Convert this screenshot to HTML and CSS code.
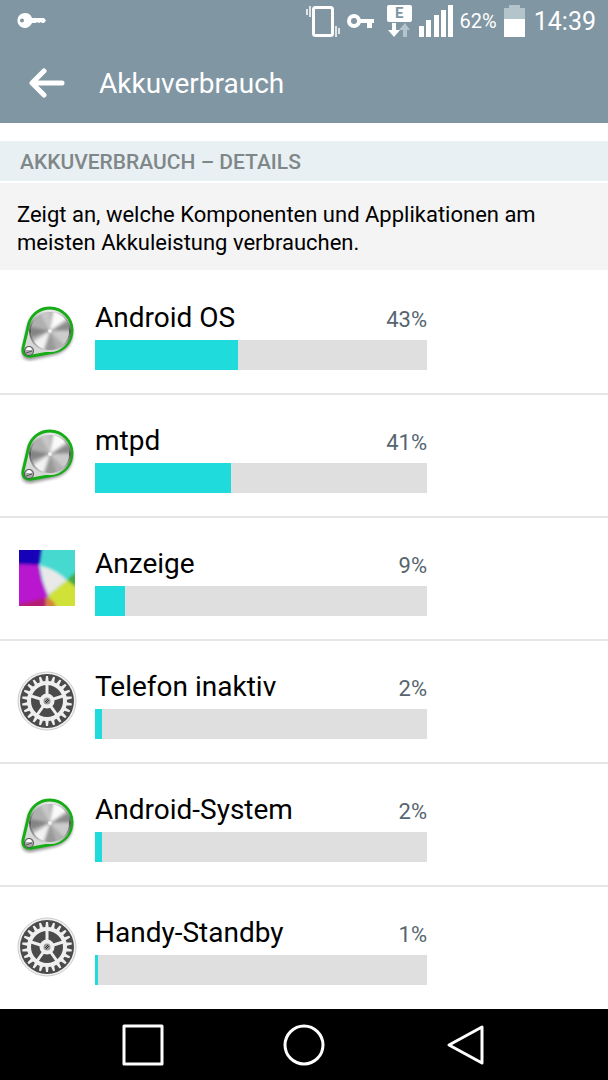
FILE: index.html
```html
<!DOCTYPE html>
<html lang="de">
<head>
  <meta charset="utf-8">
  <meta name="viewport" content="width=device-width, initial-scale=1">
  <title>Akkuverbrauch</title>
  <link rel="stylesheet" href="styles.css">
</head>
<body>
  <!-- shared icons -->
  <svg class="defs" width="0" height="0" aria-hidden="true">
    <defs>
      <linearGradient id="rim" x1="0" y1="0" x2="0" y2="1">
        <stop offset="0" stop-color="#eee"/>
        <stop offset="0.5" stop-color="#555"/>
        <stop offset="1" stop-color="#ddd"/>
      </linearGradient>
      <filter id="soft" x="-20%" y="-20%" width="140%" height="140%"><feGaussianBlur stdDeviation="1.8"/></filter>
      <clipPath id="disc"><circle cx="33" cy="29" r="19"/></clipPath>
      <clipPath id="square"><rect x="2" y="2" width="56" height="56"/></clipPath>
    </defs>
    <symbol id="knob" viewBox="0 0 60 60">
      <path d="M10 24C13 13 22 8 33 8C46 8 56 18 56 31C56 42 49 50 38 53L15 58C9 59 4 56 5 49Z" fill="#555" opacity="0.6" filter="url(#soft)"/>
      <path d="M12 21C15 12 23 6 33 6C45 6 55 16 55 28C55 39 48 48 37 50L15 54C9 55 5 52 6 46Z" fill="#d8d8d8" stroke="#16ad16" stroke-width="3"/>
      <circle cx="33" cy="29" r="21" fill="url(#rim)"/>
      <circle cx="33" cy="29" r="19" fill="#b0b0b0"/>
      <g clip-path="url(#disc)">
        <g filter="url(#soft)">
          <path d="M33 29L20 6H33Z" fill="#c8c8c8"/>
          <path d="M33 29L37 5L54 14Z" fill="#fafafa"/>
          <path d="M33 29L56 17V28Z" fill="#8c8c8c"/>
          <path d="M33 29L57 29L51 47Z" fill="#ccc"/>
          <path d="M33 29L41 53L26 53Z" fill="#999"/>
          <path d="M33 29L25 53L9 44Z" fill="#f2f2f2"/>
          <path d="M33 29L9 37V24Z" fill="#848484"/>
        </g>
        <circle cx="33" cy="29" r="2" fill="#eee"/>
      </g>
      <circle cx="12" cy="49" r="5" fill="#555"/>
      <circle cx="12" cy="49" r="4" fill="#aaa"/>
      <path d="M9 48C10 44 14 44 15 48Z" fill="#fff"/>
      <path d="M9 51L15 49" stroke="#555"/>
    </symbol>
    <symbol id="gear" viewBox="0 0 60 60">
      <circle cx="30" cy="30" r="29" fill="#f0f0f0" stroke="#ccc"/>
      <circle cx="30" cy="30" r="27" fill="#4b4b4b"/>
      <g fill="#efefef">
        <g id="teeth"><path d="M28 13L29 5H31L32 13Z"/><path d="M28 47L29 55H31L32 47Z"/></g>
        <use href="#teeth" transform="rotate(16.36 30 30)"/>
        <use href="#teeth" transform="rotate(32.73 30 30)"/>
        <use href="#teeth" transform="rotate(49.09 30 30)"/>
        <use href="#teeth" transform="rotate(65.45 30 30)"/>
        <use href="#teeth" transform="rotate(81.82 30 30)"/>
        <use href="#teeth" transform="rotate(98.18 30 30)"/>
        <use href="#teeth" transform="rotate(114.55 30 30)"/>
        <use href="#teeth" transform="rotate(130.91 30 30)"/>
        <use href="#teeth" transform="rotate(147.27 30 30)"/>
        <use href="#teeth" transform="rotate(163.64 30 30)"/>
      </g>
      <circle cx="30" cy="30" r="18" fill="none" stroke="#efefef" stroke-width="4"/>
      <path d="M30 30V13M30 30L46 25M30 30L40 44M30 30L20 44M30 30L14 25" stroke="#efefef" stroke-width="3"/>
      <circle cx="30" cy="30" r="7.500" fill="#efefef"/>
      <circle cx="30" cy="30" r="3.500" fill="#999"/>
      <path d="M28 31L31 28M29 32L32 29" stroke="#333"/>
    </symbol>
  </svg>

  <header class="top">
    <div class="status">
      <svg class="notice" width="30" height="16" viewBox="0 0 30 16" fill="#fff">
        <path fill-rule="evenodd" d="M8 0A7.500 7.500 0 0 1 15 5H27L29 7.500L27 10H25L24 9L22 10L20 9L19 10H15A7.500 7.500 0 1 1 8 0ZM5 5.500A2 2 0 1 0 5 9.500A2 2 0 1 0 5 5.500Z"/>
      </svg>
      <svg width="34" height="32" viewBox="0 0 34 32" fill="none" stroke="#fff" stroke-width="2">
        <rect x="7.500" y="2.500" width="19" height="28" rx="2" stroke-width="3"/>
        <path d="M1 4V10M4 1V12M30 21V32M33 23V29" stroke-width="1.500"/>
      </svg>
      <svg class="vpn" width="27" height="16" viewBox="0 0 27 16">
        <circle cx="7" cy="8" r="5" fill="none" stroke="#fff" stroke-width="4"/>
        <path d="M12 6H27V10H25V15H20V10H12Z" fill="#fff"/>
      </svg>
      <div class="data">
        <span class="edge">E</span>
        <svg width="22" height="14" viewBox="0 0 22 14">
          <path d="M4 0H8V7H12L6 14L0 7H4Z" fill="#fff"/>
          <path d="M15 14H19V7H22L17 0L11 7H15Z" fill="#b3c4ca"/>
        </svg>
      </div>
      <svg width="34" height="32" viewBox="0 0 34 32" fill="#fff">
        <path d="M0 21H5V32H0ZM7 15H12V32H7ZM15 10H20V32H15ZM22 5H27V32H22ZM29 0H34V32H29Z"/>
      </svg>
      <span class="level">62%</span>
      <svg width="21" height="32" viewBox="0 0 21 32">
        <path d="M0 3H5V0H16V3H21V14H0Z" fill="#b3c4ca"/>
        <path d="M0 14H21V32H0Z" fill="#fff"/>
      </svg>
      <time class="clock">14:39</time>
    </div>
    <div class="titlebar">
      <button class="back" type="button" aria-label="Zurück">
        <svg width="36" height="30" viewBox="0 0 36 30" fill="none" stroke="#fff" stroke-width="5" stroke-linecap="round" stroke-linejoin="round">
          <path d="M15 3L3 15L15 27M4 15H33"/>
        </svg>
      </button>
      <h1>Akkuverbrauch</h1>
    </div>
  </header>

  <main>
    <h2>AKKUVERBRAUCH – DETAILS</h2>
    <p class="info">Zeigt an, welche Komponenten und Applikationen am meisten Akkuleistung verbrauchen.</p>
    <ul class="usage">
      <li>
        <svg class="icon"><use href="#knob"/></svg>
        <div class="entry">
          <div class="line"><span class="name">Android OS</span><span class="percent">43%</span></div>
          <div class="bar"><div class="fill" style="width: 43%"></div></div>
        </div>
      </li>
      <li>
        <svg class="icon"><use href="#knob"/></svg>
        <div class="entry">
          <div class="line"><span class="name">mtpd</span><span class="percent">41%</span></div>
          <div class="bar"><div class="fill" style="width: 41%"></div></div>
        </div>
      </li>
      <li>
        <svg class="icon" viewBox="0 0 60 60">
          <g clip-path="url(#square)">
            <rect width="60" height="60" fill="#45d9cf"/>
            <g filter="url(#soft)">
              <path d="M-4 -4H25L22 18L-4 17Z" fill="#1600b8"/>
              <path d="M-4 16L22 17L25 32L31 47L28 64H-4Z" fill="#b819cf"/>
              <path d="M-4 58L30 49L40 64H-4Z" fill="#b51c72"/>
              <path d="M31 47L50 32L64 38V64H40Z" fill="#d0e138"/>
              <path d="M50 32L64 20V43Z" fill="#43ad43"/>
              <path d="M29 48L37 54L41 64H29Z" fill="#d4853a"/>
              <path d="M23 17Q41 22 50 32L31 47Q25 34 23 17Z" fill="#e9e9e9"/>
            </g>
          </g>
        </svg>
        <div class="entry">
          <div class="line"><span class="name">Anzeige</span><span class="percent">9%</span></div>
          <div class="bar"><div class="fill" style="width: 9%"></div></div>
        </div>
      </li>
      <li>
        <svg class="icon"><use href="#gear"/></svg>
        <div class="entry">
          <div class="line"><span class="name">Telefon inaktiv</span><span class="percent">2%</span></div>
          <div class="bar"><div class="fill" style="width: 2%"></div></div>
        </div>
      </li>
      <li>
        <svg class="icon"><use href="#knob"/></svg>
        <div class="entry">
          <div class="line"><span class="name">Android-System</span><span class="percent">2%</span></div>
          <div class="bar"><div class="fill" style="width: 2%"></div></div>
        </div>
      </li>
      <li>
        <svg class="icon"><use href="#gear"/></svg>
        <div class="entry">
          <div class="line"><span class="name">Handy-Standby</span><span class="percent">1%</span></div>
          <div class="bar"><div class="fill" style="width: 1%"></div></div>
        </div>
      </li>
    </ul>
  </main>

  <nav class="keys">
    <button type="button" aria-label="Übersicht">
      <svg width="42" height="42" viewBox="0 0 42 42"><rect x="2" y="2" width="38" height="38"/></svg>
    </button>
    <button type="button" aria-label="Startseite">
      <svg width="42" height="42" viewBox="0 0 42 42"><circle cx="21" cy="21" r="19"/></svg>
    </button>
    <button type="button" aria-label="Zurück">
      <svg width="42" height="42" viewBox="0 0 42 42"><path d="M38 3V39L5 21Z"/></svg>
    </button>
  </nav>
</body>
</html>
```
FILE: styles.css
```css
* {
  box-sizing: border-box;
}
body {
  margin: 0;
  min-height: 100vh;
  display: flex;
  flex-direction: column;
  background: #fff;
  color: #000;
  font-family: Roboto, "Liberation Sans", sans-serif;
}
svg {
  display: block;
  flex: none;
}
.defs {
  position: absolute;
}
button {
  padding: 0;
  border: 0;
  background: none;
}
.top {
  background: #8096a3;
  color: #fff;
}
/* status bar */
.status {
  display: flex;
  align-items: center;
  gap: 7px;
  height: 42px;
  padding: 0 12px 0 17px;
}
.notice {
  margin-right: auto;
}
.vpn {
  margin-right: 6px;
}
.data {
  display: flex;
  flex-direction: column;
  align-items: center;
  gap: 1px;
}
.edge {
  width: 25px;
  border-radius: 2px;
  background: #fff;
  color: #8096a3;
  font-size: 15px;
  font-weight: 700;
  line-height: 17px;
  text-align: center;
}
.level {
  font-size: 20px;
}
.clock {
  margin-left: 2px;
  font-size: 25px;
}
/* title */
.titlebar {
  display: flex;
  align-items: center;
  gap: 34px;
  height: 81px;
  padding: 0 29px;
}
h1 {
  margin: 0;
  padding-top: 2px;
  font-size: 28px;
  font-weight: 400;
}
main {
  flex: 1;
  padding-top: 18px;
}
h2 {
  margin: 0 0 2px;
  padding: 2px 20px 0;
  background: #e8f0f3;
  color: #7f8788;
  font-size: 21px;
  font-weight: 500;
  line-height: 38px;
}
.info {
  margin: 0;
  padding: 18px 17px 13px;
  background: #f4f4f4;
  font-size: 22px;
  line-height: 28px;
}
/* list */
.usage {
  margin: 0;
  padding: 2px 0 0;
  list-style: none;
}
.usage li {
  display: flex;
  gap: 18px;
  padding: 30px 181px 23px 17px;
  border-bottom: 2px solid #e6e6e6;
}
.usage li:last-child {
  border-bottom: 0;
}
.icon {
  width: 60px;
  height: 60px;
}
.entry {
  flex: 1;
}
.line {
  display: flex;
  justify-content: space-between;
  align-items: baseline;
  height: 38px;
  line-height: 32px;
}
.name {
  font-size: 28px;
}
.percent {
  color: #56656f;
  font-size: 22px;
}
.bar {
  height: 30px;
  background: #dfdfdf;
}
.fill {
  height: 100%;
  background: #1fdbdc;
}
/* navigation keys */
.keys {
  display: grid;
  grid-template-columns: repeat(3, 1fr);
  height: 71px;
  padding: 0 62px;
  background: #000;
}
.keys button {
  display: flex;
  align-items: center;
  justify-content: center;
}
.keys svg {
  fill: none;
  stroke: #fff;
  stroke-width: 3px;
  stroke-linejoin: round;
}
```
